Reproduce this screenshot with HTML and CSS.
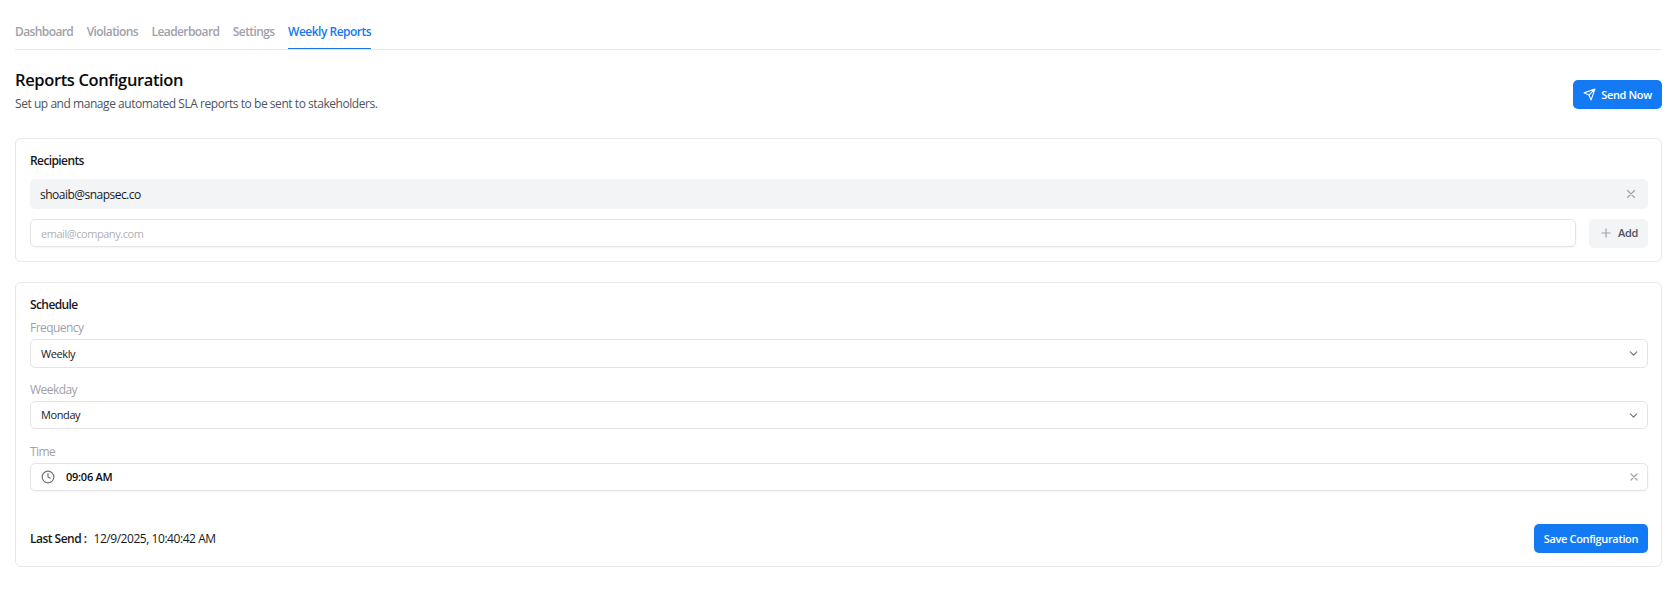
FILE: index.html
```html
<!DOCTYPE html>
<html lang="en">

<head>
    <meta charset="UTF-8">
    <meta name="viewport" content="width=device-width, initial-scale=1.0">
    <title>Weekly Reports</title>
    <link rel="stylesheet" href="styles.css">
</head>

<body>
    <!-- Tabs -->
    <nav class="tabs">
        <a class="tab">Dashboard</a>
        <a class="tab">Violations</a>
        <a class="tab">Leaderboard</a>
        <a class="tab">Settings</a>
        <a class="tab active">Weekly Reports</a>
    </nav>

    <!-- Page heading -->
    <header class="page-header">
        <div>
            <h1>Reports Configuration</h1>
            <p class="subtitle">Set up and manage automated SLA reports to be sent to stakeholders.</p>
        </div>
        <button class="btn btn-primary send-btn">
            <svg width="13" height="13" viewBox="0 0 24 24" fill="none" stroke="currentColor" stroke-width="2" stroke-linecap="round" stroke-linejoin="round">
                <path d="M22 2 11 13M22 2l-7 20-4-9-9-4z" />
            </svg>
            <span>Send Now</span>
        </button>
    </header>

    <!-- Recipients -->
    <section class="card recipients">
        <h2>Recipients</h2>
        <div class="recipient">
            <span>shoaib@snapsec.co</span>
            <svg width="14" height="14" viewBox="0 0 24 24" fill="none" stroke="currentColor" stroke-width="2" stroke-linecap="round">
                <path d="M18 6 6 18M6 6l12 12" />
            </svg>
        </div>
        <div class="add-row">
            <div class="field placeholder">email@company.com</div>
            <button class="btn add-btn">
                <svg width="14" height="14" viewBox="0 0 24 24" fill="none" stroke="currentColor" stroke-width="2" stroke-linecap="round">
                    <path d="M5 12h14M12 5v14" />
                </svg>
                <span>Add</span>
            </button>
        </div>
    </section>

    <!-- Schedule -->
    <section class="card schedule">
        <h2>Schedule</h2>
        <div class="form-group">
            <div class="label">Frequency</div>
            <div class="field select tall">
                <span>Weekly</span>
                <svg width="13" height="13" viewBox="0 0 24 24" fill="none" stroke="currentColor" stroke-width="2" stroke-linecap="round" stroke-linejoin="round">
                    <path d="m6 9 6 6 6-6" />
                </svg>
            </div>
        </div>
        <div class="form-group">
            <div class="label">Weekday</div>
            <div class="field select">
                <span>Monday</span>
                <svg width="13" height="13" viewBox="0 0 24 24" fill="none" stroke="currentColor" stroke-width="2" stroke-linecap="round" stroke-linejoin="round">
                    <path d="m6 9 6 6 6-6" />
                </svg>
            </div>
        </div>
        <div class="form-group">
            <div class="label">Time</div>
            <div class="field time">
                <svg width="14" height="14" viewBox="0 0 24 24" fill="none" stroke="currentColor" stroke-width="2" stroke-linecap="round" stroke-linejoin="round">
                    <circle cx="12" cy="12" r="10" />
                    <path d="M12 6v6l4 2" />
                </svg>
                <span>09:06 AM</span>
                <svg class="clear" width="12" height="12" viewBox="0 0 24 24" fill="none" stroke="currentColor" stroke-width="2.4" stroke-linecap="round">
                    <path d="M18 6 6 18M6 6l12 12" />
                </svg>
            </div>
        </div>
        <div class="card-footer">
            <div class="last-send"><strong>Last Send :</strong><span>12/9/2025, 10:40:42 AM</span></div>
            <button class="btn btn-primary save-btn">Save Configuration</button>
        </div>
    </section>
</body>

</html>
```
FILE: styles.css
```css
* {
    box-sizing: border-box;
}

body {
    margin: 0;
    padding: 15px 13px 0 15px;
    background-color: #fff;
    color: #18181b;
    font-family: "Open Sans", "Noto Sans", sans-serif;
    font-size: 12px;
    line-height: 16px;
    letter-spacing: -0.45px;
}

h1,
h2,
p {
    margin: 0;
}

/* Tabs */
.tabs {
    display: flex;
    gap: 13.5px;
    height: 35px;
    border-bottom: 1px solid #e5e7eb;
}

.tab {
    height: 34px;
    padding-top: 9px;
    color: #a1a1aa;
    font-weight: 570;
    letter-spacing: -0.6px;
    white-space: nowrap;
}

.tab.active {
    color: #1677f2;
    border-bottom: 1px solid #1677f2;
    letter-spacing: -0.5px;
}

/* Page heading */
.page-header {
    display: flex;
    justify-content: space-between;
    height: 88px;
    padding-top: 18px;
}

h1 {
    color: #09090b;
    font-size: 16.5px;
    font-weight: 550;
    line-height: 24px;
    letter-spacing: -0.37px;
}

.subtitle {
    margin-top: 4px;
    color: #4b5563;
}

/* Buttons */
.btn {
    display: flex;
    align-items: center;
    justify-content: center;
    height: 29px;
    padding: 0;
    border: none;
    border-radius: 5px;
    font: 600 11px/16px "Open Sans", "Noto Sans", sans-serif;
    letter-spacing: -0.35px;
    white-space: nowrap;
}

.btn-primary {
    background-color: #147af3;
    color: #fff;
}

.send-btn {
    gap: 5px;
    width: 89px;
    margin-top: 12px;
}

/* Cards */
.card {
    padding: 14px 13px 14px 14px;
    border: 1px solid #e8e8ea;
    border-radius: 6px;
}

.recipients {
    height: 124px;
    margin-bottom: 20px;
}

.schedule {
    height: 285px;
}

h2 {
    font-size: 12px;
    font-weight: 600;
    line-height: 16px;
    letter-spacing: -0.6px;
}

.recipient {
    display: flex;
    align-items: center;
    justify-content: space-between;
    height: 30px;
    margin-top: 10px;
    padding: 1px 10px 0;
    border-radius: 5px;
    background-color: #f3f4f6;
    letter-spacing: -0.52px;
}

.recipient svg {
    margin-top: -2px;
    color: #9ca3af;
}

.add-row {
    display: flex;
    gap: 13px;
    margin-top: 10px;
}

.field {
    display: flex;
    flex: 1;
    align-items: center;
    height: 28px;
    padding: 0 7px 0 10px;
    border: 1px solid #e4e4e7;
    border-radius: 5px;
    font-size: 11px;
    letter-spacing: -0.4px;
}

.field.tall {
    height: 29px;
}

.placeholder {
    padding-top: 1px;
    color: #b0b0b6;
    box-shadow: 0 1px 2px rgba(0, 0, 0, 0.05);
    letter-spacing: -0.45px;
}

.add-btn {
    gap: 5px;
    width: 59px;
    padding-bottom: 2px;
    background-color: #f3f4f6;
    color: #4b5563;
}

.add-btn svg {
    color: #9ca3af;
}

/* Schedule form */
.form-group {
    height: 62px;
}

h2 + .form-group {
    margin-top: 7px;
}

.label {
    height: 19px;
    color: #a1a1aa;
    letter-spacing: -0.55px;
}

.select {
    justify-content: space-between;
}

.select svg {
    color: #71717a;
}

.time {
    box-shadow: 0 1px 2px rgba(0, 0, 0, 0.05);
}

.time svg {
    color: #71717a;
}

.time span {
    margin-left: 11px;
    color: #09090b;
    font-weight: 550;
    letter-spacing: -0.25px;
}

.time .clear {
    margin-left: auto;
    color: #a1a1aa;
}

.card-footer {
    display: flex;
    align-items: center;
    justify-content: space-between;
    margin-top: 18px;
}

.last-send strong {
    margin-right: 7px;
    font-weight: 600;
    letter-spacing: -0.52px;
}

.save-btn {
    width: 114px;
}
```
